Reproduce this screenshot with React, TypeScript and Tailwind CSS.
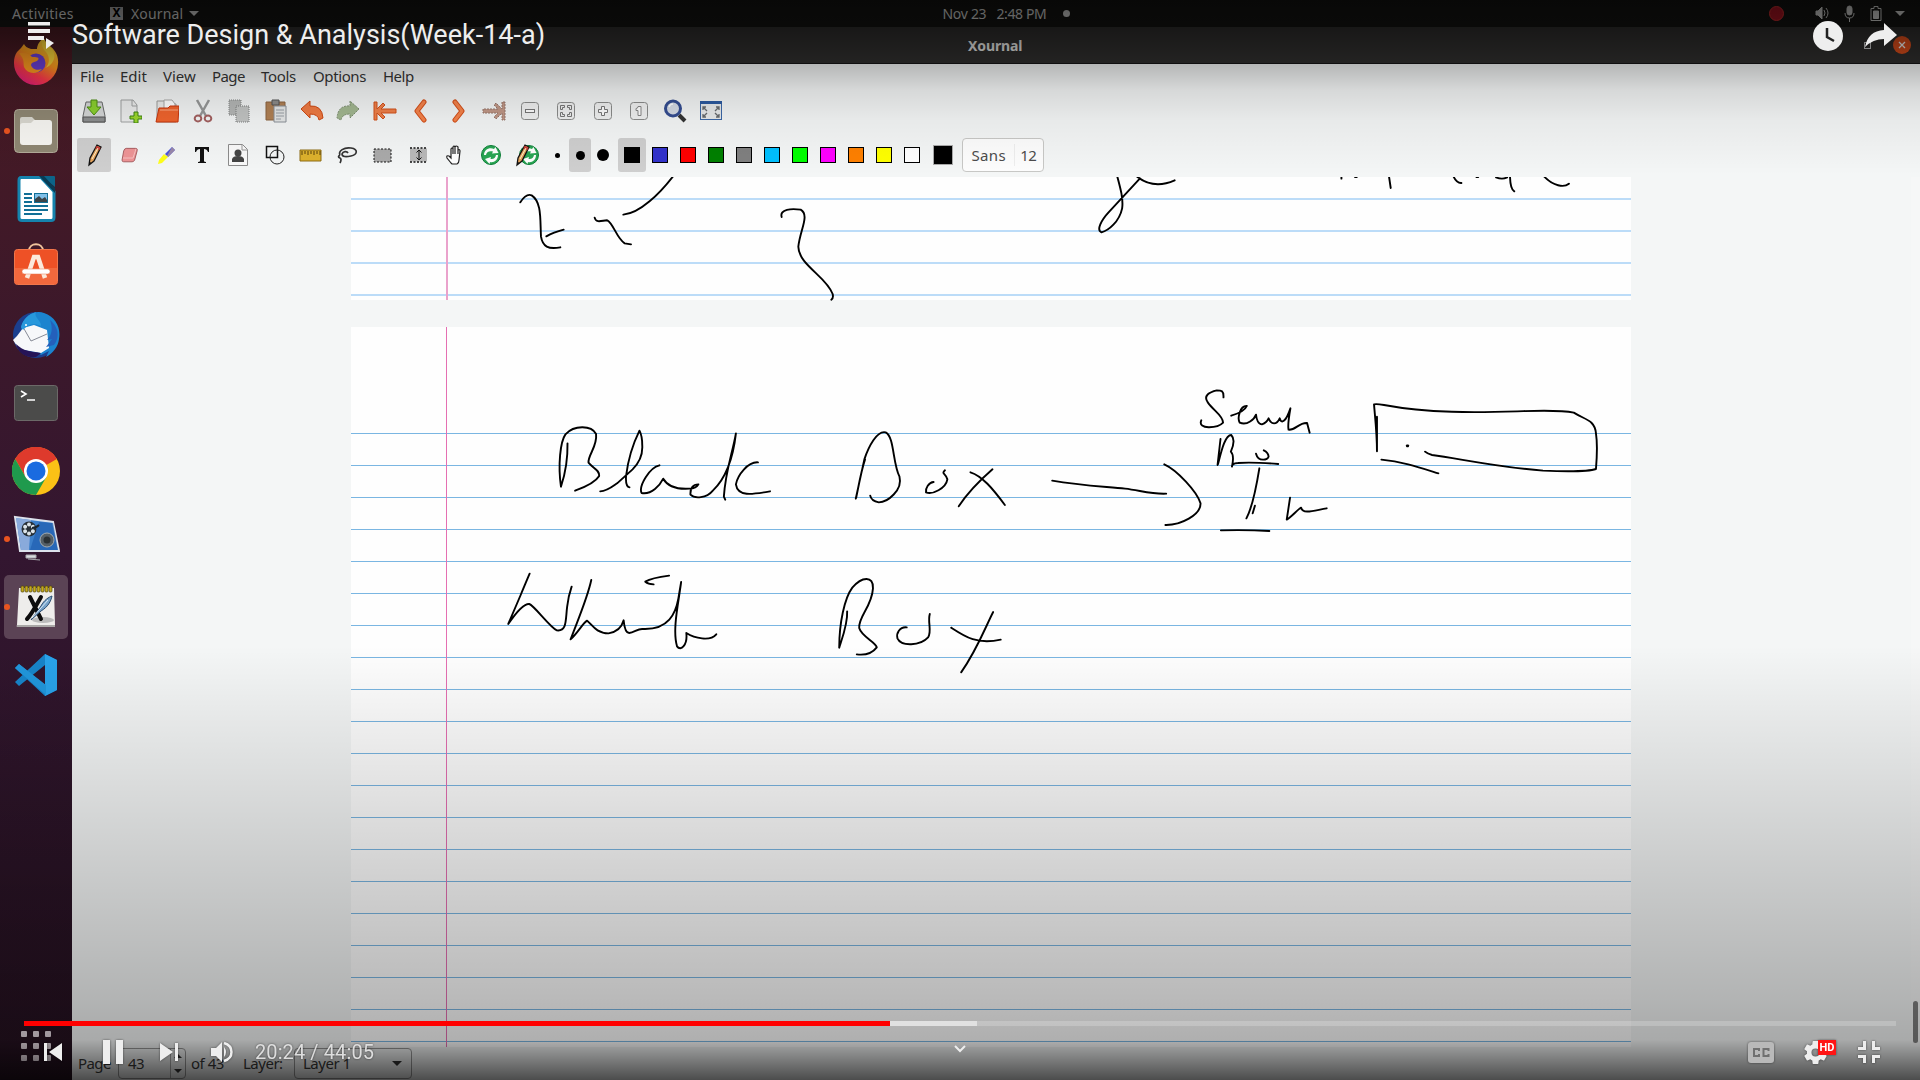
import React from "react";

type P = { children?: React.ReactNode; className?: string };

/* Dock ------------------------------------------------------------- */
function DockItem({ children, running, active }: { children: React.ReactNode; running?: boolean; active?: boolean }) {
  return (
    <div className="relative flex h-[68px] w-[72px] shrink-0 items-center justify-center">
      {active && <div className="absolute inset-x-1 inset-y-0.5 rounded-[5px] bg-[#5b4355]" />}
      {running && <div className="absolute left-1 top-[31px] size-[6px] rounded-full bg-[#e95420]" />}
      <svg className="relative size-12" viewBox="0 0 48 48">
        {children}
      </svg>
    </div>
  );
}

function Dock() {
  return (
    <div className="flex w-[72px] shrink-0 flex-col bg-linear-to-b from-[#491a22] via-[#331630] to-[#24111f] pt-0.5">
      <DockItem>
        <defs>
          <linearGradient id="ff" x1="0.8" y1="0" x2="0.3" y2="1">
            <stop offset="0" stopColor="#ffe23c" />
            <stop offset=".45" stopColor="#ff9a1c" />
            <stop offset=".75" stopColor="#ff3a4a" />
            <stop offset="1" stopColor="#e01d7a" />
          </linearGradient>
        </defs>
        <g transform="translate(0 -1)">
          <path d="M5 14c-2 3-3 6-3 10a22 22 0 0 0 44 2c1-9-4-15-8-18-4-3-6-6-6-8-5 3-7 8-7 11l-6 0c-4-1-6-3-7-5l-3 4z" fill="url(#ff)" />
          <circle cx="24" cy="25" r="9.500" fill="#6b3fd6" />
          <path d="M7 15c7-1 10 1 13 4 4 0 8 0 6 3-3 3-6 1-7 5 1 4 6 6 11 4-5 6-15 5-18-2-1-5 1-7-5-14z" fill="#ff9b20" />
          <path d="M32 0c-3 4-3 9 2 14 4 5 4 12-1 16 9-3 12-13 7-19-4-4-7-6-8-11z" fill="#ffd93a" />
        </g>
      </DockItem>
      <DockItem running>
        <rect x="2.500" y="2.500" width="43" height="43" rx="4" fill="#8f8773" stroke="#b2ab99" />
        <path d="M8 12q0-2 2-2h10l3 3h15v8H8z" fill="#d9d7cf" />
        <path d="M8 19q0-3 3-3h8l3-3h15q3 0 3 3v19q0 3-3 3H11q-3 0-3-3z" fill="#f7f6f2" />
      </DockItem>
      <DockItem>
        <path d="M9 2.500h20l13 14v26q0 3-3 3H10q-3 0-3-3v-37q0-3 2-3z" fill="#fff" stroke="#1583ad" strokeWidth="3" />
        <path d="M29 1h13q1 0 1 1v10z" fill="#0c6489" />
        <path d="M27 1l16 17v-5L32 1z" fill="#083c55" />
        <path d="M12 19h8M12 23h8M12 27h8M12 31h24M12 35h24M12 39h18" stroke="#126f96" strokeWidth="2" />
        <rect x="22.500" y="18.500" width="13" height="9" fill="#7fbfe8" stroke="#126f96" />
        <path d="M23 27v-3l4-3 3 3 3-2 2 3v2z" fill="#3b4347" />
      </DockItem>
      <DockItem>
        <g transform="translate(0 -1)">
          <path d="M17 9c0-9 14-9 14 0" fill="none" stroke="#f0c39d" strokeWidth="2" />
          <rect x="2.500" y="7.500" width="43" height="35" rx="3" fill="#ee5126" stroke="#f1764b" />
          <path d="M3 26h42v14q0 2-2 2H5q-2 0-2-2z" fill="#f2683d" />
          <path d="M15 36L22 15h4l7 21" fill="none" stroke="#fbe9dc" strokeWidth="4.500" />
          <rect x="10" y="27" width="28" height="5" rx="2.500" fill="#fff" stroke="#e5754f" strokeWidth=".5" />
        </g>
      </DockItem>
      <DockItem>
        <g transform="translate(0 -1)">
          <circle cx="24" cy="25" r="23" fill="#1b3f8e" />
          <path d="M9 17C13 4 24 0 32 3c12 4 17 15 15 26-1 8-6 14-13 18l3-6-8 4-16-14z" fill="#1b84cf" />
          <path d="M5 26l6-8 11-3 13 5 2 18-8 5-22-4-6-9z" fill="#f7f8fa" />
          <path d="M11 17l8 14 16-7" fill="none" stroke="#878b96" />
          <path d="M9 17c2-8 8-13 15-15-3 5 6 9 5 14-7-3-13-2-18 4z" fill="#2798dc" />
          <path d="M38 10c3 8 2 15-3 20l5-1-6 8 8-2c5-6 6-17-4-25z" fill="#2460bb" />
          <path d="M4 34c7 7 15 8 25 9l-5 4C14 48 6 43 4 34z" fill="#261457" />
          <circle cx="14" cy="15" r="1" fill="#fff" />
        </g>
      </DockItem>
      <DockItem>
        <rect x="2.500" y="6.500" width="43" height="35" rx="3" fill="#4b4b4a" stroke="#6c6968" />
        <path d="M9 12l5 3-5 3M15 21h8" fill="none" stroke="#fff" strokeWidth="1.600" />
      </DockItem>
      <DockItem>
        <circle cx="24" cy="24" r="24" fill="#fbc116" />
        <path d="M24 24L3.200 12A24 24 0 0 1 44.800 12z" fill="#de3a2c" />
        <path d="M24 12h20.800A24 24 0 0 0 3.200 12L13.600 30z" fill="#de3a2c" />
        <path d="M3.200 12A24 24 0 0 0 24 48l10.400-18L24 36 13.600 30z" fill="#1f9a4d" />
        <circle cx="24" cy="24" r="12" fill="#fff" />
        <circle cx="24" cy="24" r="9.500" fill="#1a6be0" />
      </DockItem>
      <DockItem running>
        <g transform="translate(0 -1)">
          <path d="M3 3l38 5 6 29-39 0z" fill="#3c7fca" stroke="#dce2ec" strokeWidth="2" />
          <path d="M4 4l15 2-2 30H9z" fill="#89aadb" />
          <path d="M27 8l14 1 5 27-28 0z" fill="#1d5cae" opacity=".65" />
          <circle cx="17" cy="15" r="7.500" fill="#272f36" />
          {[0, 60, 120, 180, 240, 300].map((a) => (
            <circle key={a} cx="17" cy="10.500" r="2" fill="#dbe3e8" transform={`rotate(${a} 17 15)`} />
          ))}
          <path d="M20 14q4 0 7-3" stroke="#1c2630" strokeWidth="2" />
          <circle cx="35" cy="26" r="7" fill="#555f66" stroke="#a3abb0" />
          <circle cx="35" cy="26" r="3.500" fill="#2a3034" />
          <path d="M14 41h10v3H14zM16 45l12 1" fill="#d8dadd" stroke="#a9a9ae" />
        </g>
      </DockItem>
      <DockItem running active>
        <g transform="translate(0 -1)">
          <path d="M7 6h35l1 37q0 2-2 2H6q-2 0-1-2z" fill="#eeedeb" />
          <path d="M5 43h38v2H5z" fill="#a9a7a6" />
          <ellipse cx="31" cy="38" rx="11" ry="3" fill="#bbb" />
          {[0, 1, 2, 3, 4, 5, 6, 7].map((i) => (
            <rect key={i} x={9 + i * 4} y="4" width="3" height="6" rx="1" fill="#c3a91e" stroke="#4d430e" strokeWidth=".7" />
          ))}
          <path d="M18 15l11 22M29 15c-4 7-9 17-14 22" stroke="#0d0d0d" strokeWidth="4" strokeLinecap="round" />
          <path d="M19 38l10-14c3-6 8-9 11-10-1 5-4 11-11 15z" fill="#77a3c9" stroke="#2b4d70" />
          <path d="M20 36l16-18" stroke="#dcebf6" />
        </g>
      </DockItem>
      <DockItem>
        <path d="M33 3l12 6v30l-12 6L3 17l4-4 26 21V14L7 35l-4-4L33 3z" fill="#1784c9" />
        <path d="M33 3l12 6v30l-12 6z" fill="#29a3ea" />
        <path d="M3 17l4-4 27 21v10z" fill="#2196db" />
      </DockItem>
      <div className="mt-auto mb-[19px] ml-[21px] grid w-[30px] grid-cols-3 gap-[6px]">
        {Array.from({ length: 9 }, (_, i) => (
          <div key={i} className="size-[6px] rounded-[1px] bg-[#e8dce4]" />
        ))}
      </div>
    </div>
  );
}

/* Toolbars ---------------------------------------------------------- */
function Cell({ children, className = "w-[36.1px]" }: P) {
  return (
    <div className={`flex h-[34px] shrink-0 items-center justify-center ${className}`}>
      <svg className="size-6" viewBox="0 0 24 24" fill="none">
        {children}
      </svg>
    </div>
  );
}

const btn = <rect x="3.500" y="3.500" width="17" height="17" rx="3" fill="#f0f1f1" stroke="#8b8c8b" />;
const pencil = (
  <>
    <path d="M7 22l1-7L15 2l4 2-7 14z" fill="#e5a35b" stroke="#111" strokeWidth="1.300" />
    <path d="M14 4l4 2" stroke="#c43a34" strokeWidth="3" />
    <path d="M10 16l6-11" stroke="#fff0cc" />
    <path d="M7 22l1-3 1.500 1z" fill="#111" />
  </>
);
const recycle = (
  <>
    <circle cx="12" cy="12" r="9.500" fill="#2aa654" stroke="#0d8038" />
    <path d="M5 12c0-5 5-8 10-6l1.500-2 3 6-6.500.500 1-2C10 7.500 7.500 9 7 12z" fill="#fff" />
    <path d="M19 12c0 5-4 8-8 7l-.5 2L6 16l6-2-.5 2c3 .5 5-1 5.500-4z" fill="#fff" />
  </>
);

function MainToolbar() {
  const w = "w-[36.32px]";
  return (
    <div className="flex h-[44px] items-center pl-[4px]">
      <Cell className={w}>
        <path d="M4 3h16l3 14v6H1v-6z" fill="#d5d7d7" stroke="#696b6b" />
        <path d="M1 18h22v5H1z" fill="#8d8f90" stroke="#555" />
        <path d="M9 1h6v7h4l-7 8-7-8h4z" fill="#8bd12f" stroke="#4c8d12" />
      </Cell>
      <Cell className={w}>
        <path d="M3 1h12l4 5v17H3z" fill="#eceded" stroke="#a0a2a2" />
        <path d="M14 1v6h5" stroke="#a0a2a2" />
        <path d="M16 14h4v4h4v3h-4v4h-4v-4h-4v-3h4z" fill="#9bd72d" stroke="#3d8413" transform="translate(0 -1)" />
      </Cell>
      <Cell className={w}>
        <path d="M2 2h9l2 3h8v18H2z" fill="#ececeb" stroke="#9e9e9c" />
        <path d="M9 1h8l3 4v8H9z" fill="#fff" stroke="#a9a9a7" />
        <path d="M4 9h9l2-2h9l-1 16H1z" fill="#f0642d" stroke="#c9360d" />
        <path d="M5 11h18" stroke="#ffab83" />
      </Cell>
      <Cell className={w}>
        <path d="M6 1l9 16M18 1L9 17" stroke="#969898" strokeWidth="2.500" />
        <ellipse cx="7" cy="19.500" rx="3.300" ry="3" stroke="#a3605f" strokeWidth="2" />
        <ellipse cx="17" cy="19.500" rx="3.300" ry="3" stroke="#a3605f" strokeWidth="2" />
      </Cell>
      <Cell className={w}>
        <path d="M2 1h12v15H2z" fill="#b5b7b6" stroke="#858786" strokeDasharray="1 1" />
        <path d="M9 7h13v16H9z" fill="#c2c4c3" stroke="#7d7f7e" strokeDasharray="1 1" />
      </Cell>
      <Cell className={w}>
        <path d="M2 3h19v18H2z" fill="#b18154" stroke="#8c6440" />
        <path d="M8 1h7v5H8z" fill="#8d8c8a" stroke="#555" />
        <path d="M10 7h12v16H10z" fill="#e5e7e7" stroke="#8a9097" />
        <path d="M12 11h8M12 14h8M12 17h8M12 20h5" stroke="#9aa0a6" />
      </Cell>
      <Cell className={w}>
        <path d="M1 10l9-8v5q12-1 13 12l-4 2q-1-6-9-6v4z" fill="#f07b43" stroke="#cf4812" />
      </Cell>
      <Cell className={w}>
        <path d="M23 10l-9-8v5Q2 6 1 19l4 2q1-6 9-6v4z" fill="#a3b891" stroke="#7c8e70" strokeDasharray="2 1" />
      </Cell>
      <Cell className={w}>
        <path d="M1 3h3v7l6-6 2 2-4 4h15v4H8l4 4-2 2-6-6v7H1z" fill="#f08049" stroke="#d3501b" />
      </Cell>
      <Cell className={w}>
        <path d="M15 3l-7 9 7 9" stroke="#d34d17" strokeWidth="5" strokeLinecap="round" strokeLinejoin="round" />
        <path d="M15 3l-7 9 7 9" stroke="#f5834b" strokeWidth="3" strokeLinecap="round" strokeLinejoin="round" />
      </Cell>
      <Cell className={w}>
        <path d="M10 3l7 9-7 9" stroke="#d34d17" strokeWidth="5" strokeLinecap="round" strokeLinejoin="round" />
        <path d="M10 3l7 9-7 9" stroke="#f5834b" strokeWidth="3" strokeLinecap="round" strokeLinejoin="round" />
      </Cell>
      <Cell className={w}>
        <path d="M23 3h-3v7l-6-6-2 2 4 4H1v4h15l-4 4 2 2 6-6v7h3z" fill="#c09786" stroke="#97766b" strokeDasharray="2 1" />
      </Cell>
      <Cell className={w}>
        {btn}
        <rect x="7.500" y="10.500" width="9" height="3" stroke="#777" fill="#fff" />
      </Cell>
      <Cell className={w}>
        {btn}
        <path d="M6.500 10.500v-4h4v2h-2v2zM17.500 10.500v-4h-4v2h2v2zM6.500 13.500v4h4v-2h-2v-2zM17.500 13.500v4h-4v-2h2v-2z" stroke="#777" />
      </Cell>
      <Cell className={w}>
        {btn}
        <path d="M10.500 7.500h3v3h3v3h-3v3h-3v-3h-3v-3h3z" stroke="#777" fill="#fff" />
      </Cell>
      <Cell className={w}>
        {btn}
        <path d="M11 7.500h3v9h-3v-5H9v-2q2 0 2-2z" stroke="#888" fill="#fff" />
      </Cell>
      <Cell className={w}>
        <path d="M16 16l6 6" stroke="#333" strokeWidth="4" />
        <circle cx="10" cy="9.500" r="7.500" fill="#d5dbe5" stroke="#344d91" strokeWidth="3" />
        <path d="M6 8q1-3 4-3" stroke="#fff" strokeWidth="1.500" />
      </Cell>
      <Cell className={w}>
        <rect x="1.500" y="2.500" width="21" height="18" fill="#e8eaeb" stroke="#3c68a8" />
        <path d="M1 2h22v3H1z" fill="#2c5aa0" />
        <path d="M4 11V8h3M4 8l4 4M20 11V8h-3M20 8l-4 4M4 15v3h3M4 18l4-4M20 15v3h-3M20 18l-4-4" stroke="#686b6e" strokeWidth="1.300" />
      </Cell>
    </div>
  );
}

function Swatch({ color, active }: { color: string; active?: boolean }) {
  return (
    <div className={`flex h-[34px] w-[28px] shrink-0 items-center justify-center rounded-[3px] ${active ? "bg-[#cfcfcf]" : ""}`}>
      <div className={`size-4 border border-black ${color}`} />
    </div>
  );
}

function PenToolbar() {
  return (
    <div className="flex h-[44px] items-center pl-[4px]">
      <Cell className="w-[36.1px] rounded-[3px] border-x border-[#f4f6f6] bg-[#cfcfcf]">{pencil}</Cell>
      <Cell>
        <path d="M8 4h11q3 0 2 3l-3 11q-1 2-3 2H5q-2 0-2-2L5 7q1-3 3-3z" fill="#ee9496" stroke="#9b4f52" transform="translate(1.500 2) scale(.84)" />
        <path d="M5 15h10l3-9" stroke="#f7c1c1" />
      </Cell>
      <Cell>
        <path d="M18 4l3 3-7 7-3-3z" fill="#4b52e0" />
        <path d="M18 4l3 3-7 7-1-1z" fill="#98a" />
        <path d="M10 11l4 3-6 6-4 1 1-4z" fill="#ffff1a" />
      </Cell>
      <Cell>
        <path d="M5 4h14v5h-1q-1-3-4-3v12q0 1 2 1v1H8v-1q2 0 2-1V6q-3 0-4 3H5z" fill="#111" />
      </Cell>
      <Cell>
        <path d="M2.500 1.500h14l5 5v16h-19z" fill="#fafafa" stroke="#8c8c8c" />
        <path d="M16 2v5h5" stroke="#999" />
        <circle cx="12" cy="10" r="3.500" fill="#444" />
        <path d="M6 19v-3q1-3 6-3t6 3v3z" fill="#444" />
      </Cell>
      <Cell>
        <rect x="3.500" y="3.500" width="11" height="11" stroke="#111" strokeWidth="1.500" />
        <circle cx="14" cy="14" r="7" stroke="#222" />
      </Cell>
      <Cell>
        <path d="M1 7h21v11H1z" fill="#ddb22d" stroke="#8e6c15" />
        <path d="M3 8v4M6 8v3M9 8v4M12 8v3M15 8v4M18 8v3M21 8v4" stroke="#5b430a" />
      </Cell>
      <Cell>
        <path d="M5 12C3 8 9 4 16 5c8 1 6 7 0 8-5 1-9 1-9-2 1-3 5-3 6-1M5 12q-3 2 0 3 2 1 0 5" stroke="#333" strokeWidth="1.700" />
      </Cell>
      <Cell>
        <rect x="3" y="6" width="17" height="13" fill="#aaa" stroke="#111" strokeDasharray="2 1.500" />
      </Cell>
      <Cell>
        <path d="M3 5.500h17v13H3z" fill="#b9b9b9" />
        <path d="M3 5h17M3 19h17" stroke="#111" strokeDasharray="2 1.500" strokeWidth="1.500" />
        <path d="M12 7v10M9.500 9.500L12 7l2.500 2.500M9.500 14.500L12 17l2.500-2.500" stroke="#111" />
      </Cell>
      <Cell>
        <path d="M8 20l-4-5q-1-3 2-2l2 2V6q1-2 2 0v5-7q1-2 2 0v7-7q1-2 3 0v7-4q2-1 2 1l-1 9q0 3-2 4H9z" fill="#fff" stroke="#222" strokeWidth="1.200" />
      </Cell>
      <Cell>{recycle}</Cell>
      <Cell>
        <g transform="translate(2 0)">{recycle}</g>
        <g transform="translate(-5 0)">{pencil}</g>
      </Cell>
      <div className="ml-px flex items-center">
        <div className="flex w-[22px] justify-center">
          <div className="size-[5px] rounded-full bg-black" />
        </div>
        <div className="ml-px flex h-[34px] w-[22px] items-center justify-center rounded-[3px] bg-[#cfcfcf]">
          <div className="size-[9px] rounded-full bg-black" />
        </div>
        <div className="ml-px flex w-[22px] justify-center">
          <div className="size-[12px] rounded-full bg-black" />
        </div>
      </div>
      <div className="ml-[4px] flex">
        <Swatch color="bg-black" active />
        <Swatch color="bg-[#3333cc]" />
        <Swatch color="bg-[#ff0000]" />
        <Swatch color="bg-[#008000]" />
        <Swatch color="bg-[#808080]" />
        <Swatch color="bg-[#00c0ff]" />
        <Swatch color="bg-[#00ff00]" />
        <Swatch color="bg-[#ff00ff]" />
        <Swatch color="bg-[#ff8000]" />
        <Swatch color="bg-[#ffff00]" />
        <Swatch color="bg-white" />
      </div>
      <div className="ml-[7px] size-5 shrink-0 border border-[#aaa] bg-black" />
      <div className="ml-[9px] flex h-[34px] w-[82px] items-center rounded-[4px] border border-[#c8c8c6] bg-[#fdfdfd] text-[15px] text-[#4c4c4c]">
        <div className="w-[52px] border-r border-[#eee] text-center tracking-[0.3px]">Sans</div>
        <div className="flex-1 pr-[2px] text-center tracking-[-0.6px]">12</div>
      </div>
    </div>
  );
}

/* Notebook ---------------------------------------------------------- */
function Ink() {
  return (
    <svg
      className="pointer-events-none absolute inset-0 h-[870px] w-[1848px] [&_path]:[vector-effect:non-scaling-stroke]"
      viewBox="72 177 1848 870"
      fill="none"
      stroke="#000"
      strokeWidth="1.900"
      strokeLinecap="round"
      strokeLinejoin="round"
    >
      <g transform="translate(480 170) scale(.33333)">
        <path d="M121 97C133 78 145 72 155 76C186 96 180 150 183 200C188 230 205 239 241 232M199 199C215 190 232 184 251 179M344 143C348 162 370 150 382 151C400 160 410 205 434 220L453 223M430 134C480 130 540 70 580 18M905 141C898 117 935 115 962 119C990 135 960 180 955 230C956 285 1040 320 1058 372Q1061 384 1054 389" />
      </g>
      <g transform="translate(1080 160) scale(.35714 .33333)">
        <path d="M102 40C112 80 122 115 118 145C110 185 80 212 60 217C45 210 60 180 80 157L168 55M160 50C190 75 225 80 265 61M732 50V56M865 48L870 84M1046 50Q1055 70 1068 69M1165 52Q1182 60 1196 52M1204 50Q1205 88 1216 94M1300 50C1325 78 1355 84 1369 71M770 51h5M1110 51h5" />
      </g>
      <g transform="translate(500 400) scale(.34439 .33333)">
        <path d="M196 130C197 180 190 220 177 260C168 195 175 125 190 103C215 75 265 75 279 102C283 140 255 165 257 188C270 205 290 210 288 228C275 250 245 262 218 272" />
        <path d="M291 274C310 274 325 261 340 250L385 208C405 188 415 165 413 135Q413 108 405 92C382 140 370 195 366 228Q364 260 376 262M463 196C435 202 402 257 411 279C440 285 465 255 474 236C490 265 520 268 550 266Q570 265 576 253C560 253 552 265 553 284C565 297 600 295 618 272C660 230 678 165 685 100C675 160 655 210 650 290L654 299M749 187C720 185 690 225 685 253C690 290 730 284 784 274" />
        <path d="M1033 296L1058 178C1070 140 1095 90 1120 97C1145 110 1140 190 1160 230C1170 270 1125 307 1100 307Q1078 303 1075 287M1034 294C1042 255 1048 215 1060 178M1259 246C1245 247 1235 265 1237 277C1255 285 1295 265 1299 238C1295 220 1280 222 1292 211M1366 217C1400 228 1430 265 1466 315M1430 208C1400 235 1360 275 1332 319" />
        <path d="M86 521Q70 560 60 585L24 672Q65 610 85 612C100 617 145 682 165 691C195 695 190 660 195 620Q198 590 208 560M265 540C255 590 230 650 205 718C225 700 240 670 253 662C268 675 280 700 315 700Q350 695 359 661C361 683 367 699 375 699C390 698 400 685 415 687C490 690 510 640 518 595L526 546C518 610 500 690 514 739C525 755 545 735 541 699C565 715 610 725 628 703M491 527Q440 534 422 545Q430 552 446 553" />
        <path d="M1008 634C1010 670 995 710 985 743C985 670 1000 595 1023 563C1050 530 1085 526 1083 565C1080 620 1040 650 1043 684C1050 710 1090 725 1094 742Q1075 768 1036 763M1181 682C1160 680 1150 700 1154 715C1165 740 1220 738 1243 712C1255 695 1241 665 1248 642M1310 683C1350 710 1385 735 1454 719M1432 636C1410 680 1385 750 1339 817" />
      </g>
      <g transform="translate(1040 370) scale(.36990 .33333)">
        <path d="M33 332C110 347 180 350 230 356C270 361 300 373 341 371M336 283C370 300 425 365 434 400C435 435 380 466 339 465" />
        <path d="M496 82C497 62 490 61 478 61C458 66 440 77 454 98C470 123 495 137 495 158C480 175 425 180 436 151M517 137Q553 125 559 108C540 107 533 145 540 158C560 168 580 147 584 134C585 147 590 163 600 163Q613 158 618 145C625 165 640 165 648 145C652 162 664 158 677 115C673 140 670 170 672 179C690 182 700 157 722 159L729 188M488 207L480 285M481 283C490 245 500 195 517 195C530 210 520 235 516 245C525 255 522 275 519 290Q518 280 535 279C570 276 610 279 644 282M584 251C590 277 617 270 618 260Q617 247 605 241" />
        <path d="M593 295C585 350 575 410 558 445M581 407L575 430M676 383L667 449C680 440 700 415 706 413C710 435 745 420 775 415M489 481C530 480 575 480 620 483" />
        <path d="M911 140V244C911 190 906 145 903 103Q910 101 930 105C1050 130 1180 128 1290 124C1350 122 1405 119 1443 128C1475 150 1500 150 1503 190C1508 225 1505 270 1503 297C1480 306 1430 305 1360 302C1240 292 1130 265 1060 255Q1048 252 1041 245M923 269C980 275 1025 292 1077 310" />
        <path d="M992 226h3v3h-3z" fill="#000" />
      </g>
    </svg>
  );
}

function Canvas() {
  return (
    <div className="relative h-[870px] overflow-hidden bg-[#f4f6f6]">
      <div className="ml-[279px] flex w-[1280px] flex-col gap-[27px]">
        <div className="relative h-[123px] bg-[#fefefe] pt-[21px]">
          {[0, 1, 2, 3].map((i) => (
            <div key={i} className="mb-[30px] h-[2px] bg-[#bcdcf8]" />
          ))}
          <div className="absolute inset-y-0 left-[95px] w-[2px] bg-[#eaa2cc]" />
        </div>
        <div className="relative h-[740px] bg-[#fefefe] pt-[106px]">
          {Array.from({ length: 20 }, (_, i) => (
            <div key={i} className="mb-[31px] h-px bg-[#7ab6e2]" />
          ))}
          <div className="absolute inset-y-0 left-[95px] w-px bg-[#e56fb2]" />
        </div>
      </div>
      <Ink />
      <div className="absolute inset-y-0 right-0 flex w-[9px] items-end bg-white/20 pb-1">
        <div className="ml-[2px] h-[42px] w-[5px] rounded-full bg-[#7f7f7f]" />
      </div>
    </div>
  );
}

function StatusBar() {
  return (
    <div className="flex h-[33px] items-center bg-[#f4f6f6] pl-[6px] text-[15px] text-[#3a3a3a]">
      <span className="w-[40px] tracking-[-0.6px]">Page</span>
      <div className="flex h-[31px] w-[68px] items-center rounded-[4px] border border-[#999]">
        <span className="w-[51px] pl-[9px] tracking-[-0.6px]">43</span>
        <div className="flex h-full flex-1 flex-col items-center justify-between border-l border-[#aaa] py-[5px]">
          <div className="h-0 w-0 border-x-4 border-b-4 border-x-transparent border-b-[#333]" />
          <div className="h-0 w-0 border-x-4 border-t-4 border-x-transparent border-t-[#333]" />
        </div>
      </div>
      <span className="ml-[5px] w-[52px] tracking-[-0.5px]">of 43</span>
      <span className="w-[51px] tracking-[-0.5px]">Layer:</span>
      <div className="flex h-[31px] w-[118px] items-center justify-between rounded-[4px] border border-[#999] pr-[9px] pl-[8px]">
        <span className="tracking-[-0.5px]">Layer 1</span>
        <div className="h-0 w-0 border-x-[5px] border-t-[5px] border-x-transparent border-t-[#333]" />
      </div>
    </div>
  );
}

/* Desktop ----------------------------------------------------------- */
function TopBar() {
  return (
    <div className="grid h-[27px] grid-cols-[1fr_auto_1fr] items-center bg-[#141412] pb-px text-[14px] text-[#dcdcda]">
      <div className="flex items-center pl-[12px]">
        <span className="w-[98px] tracking-[0.35px]">Activities</span>
        <div className="mr-[8px] flex size-[13px] items-center justify-center bg-[#b5b5b5] text-[12px] leading-none font-bold text-black">X</div>
        <span className="tracking-[0.15px]">Xournal</span>
        <div className="ml-[6px] h-0 w-0 border-x-[5px] border-t-[5px] border-x-transparent border-t-[#dcdcda]" />
      </div>
      <div className="ml-[92px] flex items-center">
        <span className="w-[54px] tracking-[-0.3px]">Nov 23</span>
        <span className="w-[66px] tracking-[-0.4px]">2:48 PM</span>
        <div className="size-[7px] rounded-full bg-[#dcdcda]" />
      </div>
      <div className="flex items-center justify-end pr-[15px]">
        <div className="mr-[30px] size-[15px] rounded-full border border-[#d33] bg-[#b01524]" />
        <svg className="mr-[12px] size-[17px]" viewBox="0 0 17 17" fill="none" stroke="#dcdcda">
          <path d="M2 6h2l4-4v12l-4-4H2z" fill="#dcdcda" />
          <path d="M10 5q2 3 0 6M12 3q4 5 0 10" />
        </svg>
        <svg className="mr-[14px] h-[17px] w-[13px]" viewBox="0 0 13 17" fill="none" stroke="#dcdcda">
          <rect x="4" y="1" width="5" height="9" rx="2.500" fill="#dcdcda" />
          <path d="M2 8q0 5 4.500 5T11 8M6.500 13v4" />
        </svg>
        <svg className="mr-[13px] h-[15px] w-[12px]" viewBox="0 0 12 15" fill="none" stroke="#dcdcda">
          <path d="M1 2.500h3v-2h4v2h3v12H1z" />
          <path d="M3.500 5h5v7.500h-5z" fill="#dcdcda" />
        </svg>
        <div className="h-0 w-0 border-x-[5px] border-t-[5px] border-x-transparent border-t-[#dcdcda]" />
      </div>
    </div>
  );
}

function XournalWindow() {
  return (
    <div className="flex w-[1848px] flex-col bg-[#f4f6f6]">
      <div className="flex h-[37px] items-center border-b border-[#151515] bg-[#302f2e]">
        <span className="ml-[896px] text-[14px] font-bold tracking-[-0.1px] text-[#eeeeec]">Xournal</span>
        <div className="ml-auto size-[7px] border border-[#ccc]" />
        <div className="mr-[9px] ml-[22px] flex size-[18px] items-center justify-center rounded-full bg-[#e2501c]">
          <svg className="size-2" viewBox="0 0 8 8" stroke="#fff" strokeWidth="1.300">
            <path d="M1 1l6 6M7 1L1 7" />
          </svg>
        </div>
      </div>
      <div className="flex h-[25px] items-center pl-[8px] text-[15px] text-[#343434]">
        <span className="w-[40px]">File</span>
        <span className="w-[43px]">Edit</span>
        <span className="w-[49px]">View</span>
        <span className="w-[49px] tracking-[-0.6px]">Page</span>
        <span className="w-[52px] tracking-[-0.3px]">Tools</span>
        <span className="w-[70px] tracking-[-0.4px]">Options</span>
        <span className="tracking-[-0.5px]">Help</span>
      </div>
      <MainToolbar />
      <PenToolbar />
      <Canvas />
      <StatusBar />
    </div>
  );
}

/* Video player overlay ---------------------------------------------- */
function PlayerOverlay() {
  return (
    <div className="absolute inset-0 flex flex-col bg-[linear-gradient(to_bottom,rgba(0,0,0,.6)_0px,rgba(0,0,0,.5)_27px,rgba(0,0,0,.26)_64px,rgba(0,0,0,.12)_90px,rgba(0,0,0,.05)_120px,rgba(0,0,0,0)_175px,rgba(0,0,0,0)_645px,rgba(0,0,0,.06)_720px,rgba(0,0,0,.27)_1000px,rgba(0,0,0,.31)_1040px,rgba(0,0,0,.69)_1080px)] font-[Roboto,sans-serif] text-[#eee]">
      <div className="flex h-[72px] items-center">
        <svg className="ml-[26px] h-[28px] w-[30px]" viewBox="26 25 30 28" fill="#eee">
          <path d="M28 24.500h22v4H28zM28 32h22v4H28zM28 39h16v4H28zM46 41l8 5-8 6z" />
        </svg>
        <h1 className="ml-[16px] pb-px text-[27px] leading-none whitespace-nowrap">Software Design &amp; Analysis(Week-14-a)</h1>
        <svg className="mr-[20px] ml-auto size-[32px]" viewBox="0 0 32 32">
          <circle cx="16" cy="16" r="15" fill="#eee" />
          <path d="M15 8v9l7 4" stroke="#222" strokeWidth="2.500" fill="none" />
        </svg>
        <svg className="mr-[22px] mb-[2px] h-[26px] w-[34px]" viewBox="0 0 34 26" fill="#eee">
          <path d="M20 1l13 12-13 11v-7Q9 17 1 25 4 9 20 8z" />
        </svg>
      </div>
      <div className="mt-auto flex h-[5px] w-[1872px] self-center bg-white/20">
        <div className="w-[866px] bg-[#ff0000]" />
        <div className="w-[87px] bg-white/50" />
      </div>
      <div className="grid h-[54px] grid-cols-[1fr_auto_1fr] items-center pb-[2px]">
        <div className="flex items-center pl-[44px] drop-shadow-[0_0_1px_rgba(0,0,0,.5)]">
          <svg className="h-[18px] w-[18px]" viewBox="0 0 18 18" fill="#eee">
            <path d="M0 0h3v18H0zM18 0v18L5 9z" />
          </svg>
          <svg className="ml-[41px] h-[24px] w-[20px]" viewBox="0 0 20 24" fill="#eee">
            <path d="M0 0h7v24H0zM13 0h7v24h-7z" />
          </svg>
          <svg className="ml-[37px] h-[18px] w-[18px]" viewBox="0 0 18 18" fill="#eee">
            <path d="M15 0h3v18h-3zM0 0v18l13-9z" />
          </svg>
          <svg className="ml-[33px] h-[22px] w-[22px]" viewBox="0 0 22 22" fill="none">
            <path d="M0 7h5l6-6v20l-6-6H0z" fill="#eee" />
            <path d="M13 6q4 5 0 10z" fill="#eee" />
            <path d="M13 2c10 3 10 15 0 18" stroke="#eee" strokeWidth="2.500" />
          </svg>
          <span className="ml-[22px] pb-px text-[20px] leading-none tracking-[0.1px] text-[#ddd]">20:24 / 44:05</span>
        </div>
        <svg className="mb-[7px] h-[8px] w-[14px]" viewBox="0 0 14 8" fill="none" stroke="#eee" strokeWidth="2">
          <path d="M2 1l5 5 5-5" />
        </svg>
        <div className="flex items-center justify-end pr-[40px] drop-shadow-[0_0_1px_rgba(0,0,0,.5)]">
          <svg className="h-[21px] w-[26px]" viewBox="0 0 26 21" fill="none">
            <rect width="26" height="21" rx="3" fill="#b9b9b9" />
            <path d="M11 9V7H6v7h5v-2M20.500 9V7h-5v7h5v-2" stroke="#707070" strokeWidth="2" />
          </svg>
          <div className="relative ml-[30px] h-[23px] w-[23px]">
            <svg className="size-full" viewBox="2 2 20 20" fill="#eee">
              <path d="M19.400 13a7 7 0 0 0 0-2l2.100-1.600a.5.5 0 0 0 .1-.7l-2-3.400a.5.5 0 0 0-.6-.2l-2.500 1a8 8 0 0 0-1.700-1L14.500 2.400a.5.5 0 0 0-.5-.4h-4a.5.5 0 0 0-.5.4L9.200 5.100a8 8 0 0 0-1.700 1L5 5.100a.5.5 0 0 0-.6.2l-2 3.400a.5.5 0 0 0 .1.700L4.600 11a7 7 0 0 0 0 2l-2.100 1.600a.5.5 0 0 0-.1.700l2 3.400c.1.200.4.300.6.200l2.500-1a8 8 0 0 0 1.700 1l.3 2.700c0 .2.300.4.500.4h4c.2 0 .5-.2.500-.4l.3-2.700a8 8 0 0 0 1.700-1l2.500 1c.2.100.5 0 .6-.2l2-3.400a.5.5 0 0 0-.1-.7zM12 15.500a3.500 3.500 0 1 1 0-7 3.500 3.500 0 0 1 0 7z" />
            </svg>
            <div className="absolute -top-px left-[14px] flex h-[15px] w-[18px] items-center justify-center bg-[#ff1414] text-[11px] leading-none font-bold text-white">HD</div>
          </div>
          <svg className="ml-[31px] h-[22px] w-[22px]" viewBox="0 0 22 22" fill="none" stroke="#eee" strokeWidth="3">
            <path d="M6.500 0v7.500H0M15.500 0v7.500H22M6.500 22v-6.500H0M15.500 22v-6.500H22" />
          </svg>
        </div>
      </div>
    </div>
  );
}

export default function App() {
  return (
    <div className="relative flex h-[1080px] w-[1920px] flex-col overflow-hidden font-['Noto_Sans',sans-serif]">
      <TopBar />
      <div className="flex flex-1">
        <Dock />
        <XournalWindow />
      </div>
      <PlayerOverlay />
    </div>
  );
}
